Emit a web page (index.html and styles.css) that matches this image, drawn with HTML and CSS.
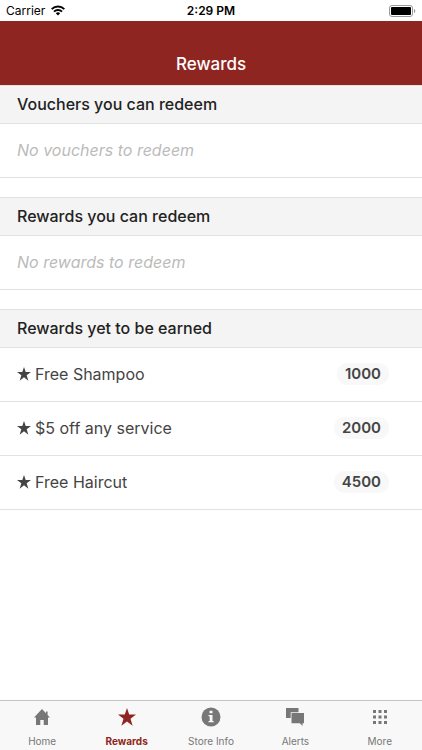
FILE: index.html
```html
<!DOCTYPE html>
<html lang="en">
<head>
<meta charset="utf-8">
<meta name="viewport" content="width=device-width, initial-scale=1">
<title>Rewards</title>
<link rel="stylesheet" href="styles.css">
</head>
<body>
<div class="status">
  <div class="carrier">
    <span>Carrier</span>
    <svg width="14" height="11" viewBox="0 0 14 11" fill="none" stroke="#000" stroke-width="2" aria-hidden="true">
      <path d="M.7 4.1a9 9 0 0 1 12.6 0M3 6.6a5.8 5.8 0 0 1 8 0"/>
      <path d="M7 10.4 4.8 8.2a3.2 3.2 0 0 1 4.4 0z" fill="#000" stroke="none"/>
    </svg>
  </div>
  <time class="clock">2:29 PM</time>
  <div class="battery">
    <svg width="27" height="12" viewBox="0 0 27 12" aria-hidden="true">
      <rect x=".5" y=".5" width="23" height="11" rx="2.5" fill="#fff" stroke="#999"/>
      <rect x="2" y="2" width="20" height="8" rx="1" fill="#000"/>
      <path d="M25 4c1.700.500 1.700 3.500 0 4z" fill="#999"/>
    </svg>
  </div>
</div>
<header class="navbar"><h1>Rewards</h1></header>
<main>
  <section>
    <h2>Vouchers you can redeem</h2>
    <p class="row empty">No vouchers to redeem</p>
  </section>
  <section>
    <h2>Rewards you can redeem</h2>
    <p class="row empty">No rewards to redeem</p>
  </section>
  <section>
    <h2>Rewards yet to be earned</h2>
    <ul>
      <li class="row"><svg class="star" viewBox="0 0 20 20" aria-hidden="true"><path d="M10 0l2.400 7.300H20l-6.200 4.600 2.400 7.600-6.200-4.700-6.200 4.700 2.400-7.600L0 7.300h7.600z"/></svg><span>Free Shampoo</span><span class="points">1000</span></li>
      <li class="row"><svg class="star" viewBox="0 0 20 20" aria-hidden="true"><path d="M10 0l2.400 7.300H20l-6.200 4.600 2.400 7.600-6.200-4.700-6.200 4.700 2.400-7.600L0 7.300h7.600z"/></svg><span>$5 off any service</span><span class="points">2000</span></li>
      <li class="row"><svg class="star" viewBox="0 0 20 20" aria-hidden="true"><path d="M10 0l2.400 7.300H20l-6.200 4.600 2.400 7.600-6.200-4.700-6.200 4.700 2.400-7.600L0 7.300h7.600z"/></svg><span>Free Haircut</span><span class="points">4500</span></li>
    </ul>
  </section>
</main>
<nav class="tabs">
  <a href="#home"><svg viewBox="0 0 20 20" aria-hidden="true"><path d="M10 2 2 10.500h2V18h4.300v-5h3.400v5H16v-7.500h2l-2.400-2.600V4.500h-1.600v1.700z"/></svg><span>Home</span></a>
  <a href="#rewards" class="active" aria-current="page"><svg viewBox="0 0 20 20" aria-hidden="true"><path d="M10 1l2.200 6.600H19l-5.500 4.200 2.100 7L10 14.600l-5.600 4.200 2.100-7L1 7.600h6.800z"/></svg><span>Rewards</span></a>
  <a href="#store"><svg viewBox="0 0 20 20" aria-hidden="true"><circle cx="10" cy="10" r="9.500"/><path fill="#f8f8f8" d="M8.500 3.800h3v2.500h-3zM7.500 8h4v6h1.200v1.200H7.500V14h1.200V9.200H7.500z"/></svg><span>Store Info</span></a>
  <a href="#alerts"><svg viewBox="0 0 20 20" aria-hidden="true"><path d="M1 1h12.500v4.200H5.700V11H1z"/><path d="M6.500 6H19v10.300h-1.500V19l-2.700-2.700H6.500z"/></svg><span>Alerts</span></a>
  <a href="#more"><svg viewBox="0 0 20 20" aria-hidden="true"><path d="M3 3h3v3H3zm5.500 0h3v3h-3zM14 3h3v3h-3zM3 8.500h3v3H3zm5.500 0h3v3h-3zm5.500 0h3v3h-3zM3 14h3v3H3zm5.500 0h3v3h-3zm5.500 0h3v3h-3z"/></svg><span>More</span></a>
</nav>
</body>
</html>
```
FILE: styles.css
```css
* {
  box-sizing: border-box;
}

body {
  margin: 0;
  min-height: 100vh;
  display: flex;
  flex-direction: column;
  background: #fff;
  color: #444;
  font-family: Inter, "Liberation Sans", sans-serif;
  font-size: 16px;
  line-height: 20px;
}

h1, h2, p, ul {
  margin: 0;
  padding: 0;
}

.status {
  display: grid;
  grid-template-columns: 1fr auto 1fr;
  align-items: center;
  height: 21px;
  padding: 0 6px;
  color: #000;
  font-size: 12px;
}

.carrier {
  display: flex;
  align-items: center;
  gap: 6px;
}

.clock {
  font-weight: 600;
}

.battery {
  display: flex;
  justify-content: flex-end;
}

.navbar {
  display: flex;
  align-items: flex-end;
  justify-content: center;
  height: 64px;
  padding-bottom: 11px;
  background: #8f2520;
  color: #fff;
}

h1 {
  font-size: 17px;
  font-weight: 500;
}

main {
  flex: 1;
}

section {
  margin-bottom: 19px;
}

h2 {
  padding: 8px 17px 9px;
  border: solid #e2e2e2;
  border-width: 1px 0;
  background: #f4f4f4;
  color: #222;
  font-size: 16px;
  font-weight: 500;
}

ul {
  list-style: none;
}

.row {
  display: flex;
  align-items: center;
  height: 54px;
  padding: 0 33px 1px 17px;
  border-bottom: 1px solid #e2e2e2;
}

.empty {
  color: #bbb;
  font-style: italic;
}

.star {
  width: 14px;
  height: 14px;
  margin-right: 4px;
  fill: #444;
}

.points {
  margin-left: auto;
  padding: 1px 8px;
  border-radius: 11px;
  background: #f8f8f8;
  font-size: 15px;
  font-weight: 600;
}

.tabs {
  display: grid;
  grid-template-columns: repeat(5, 1fr);
  height: 50px;
  border-top: 1px solid #c4c4c4;
  background: #f8f8f8;
}

.tabs a {
  display: flex;
  flex-direction: column;
  align-items: center;
  gap: 8px;
  padding-top: 6px;
  color: #777;
  font-size: 10px;
  line-height: 12px;
  text-decoration: none;
}

.tabs svg {
  width: 20px;
  height: 20px;
  fill: currentColor;
}

.tabs .active {
  color: #8f2520;
  font-weight: 700;
}
```
